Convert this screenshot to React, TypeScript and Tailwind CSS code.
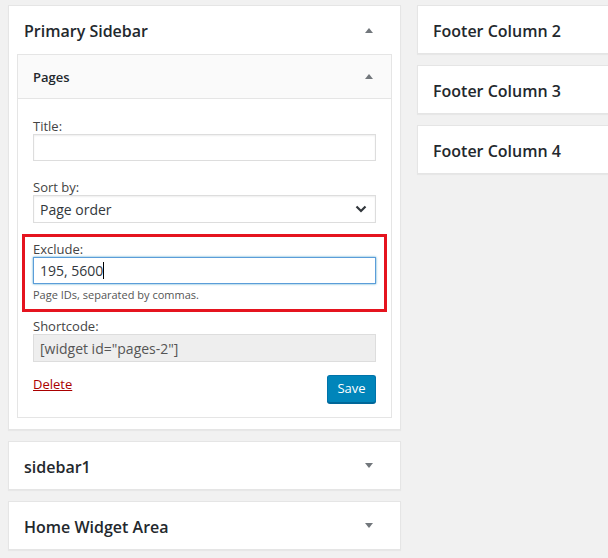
import React from "react";

const font = { fontFamily: '"Open Sans", "Noto Sans", sans-serif' };

const UpArrow = () => (
  <svg width="8" height="5" viewBox="0 0 8 5" className="fill-[#72777c]">
    <path d="M0 5 L4 0 L8 5 Z" />
  </svg>
);

const DownArrow = () => (
  <svg width="8" height="5" viewBox="0 0 8 5" className="fill-[#72777c]">
    <path d="M0 0 L8 0 L4 5 Z" />
  </svg>
);

const ClosedBox = ({ title, arrow }: { title: string; arrow?: boolean }) => (
  <div className="h-[49px] bg-white border border-[#e5e5e5] shadow-[0_1px_1px_rgba(0,0,0,0.04)] flex items-center justify-between pl-[15px] pr-[27px]">
    <h2 className="text-[16px] font-semibold text-[#23282d] mt-[2px]">{title}</h2>
    {arrow && <DownArrow />}
  </div>
);

export default function App() {
  return (
    <div
      className="w-[608px] h-[558px] overflow-hidden bg-[#f1f1f1] flex gap-[16px] pl-[8px] pt-[5px]"
      style={font}
    >
      <div className="w-[393px] shrink-0 flex flex-col gap-[11px]">
        <div className="bg-white border border-[#e5e5e5] shadow-[0_1px_1px_rgba(0,0,0,0.04)] pb-[11px]">
          <div className="h-[48px] flex items-center justify-between pl-[15px] pr-[27px]">
            <h2 className="text-[16px] font-semibold text-[#23282d] mt-[2px]">Primary Sidebar</h2>
            <UpArrow />
          </div>
          <div className="mx-[8px] border border-[#e5e5e5] bg-white">
            <div className="h-[44px] bg-[#fafafa] border-b border-[#e5e5e5] flex items-center justify-between pl-[15px] pr-[18px]">
              <h3 className="text-[13px] font-semibold text-[#23282d] mt-[2px]">Pages</h3>
              <UpArrow />
            </div>
            <div className="px-[15px] pt-[19px] pb-[14px] text-[13px] text-[#444]">
              <label className="block leading-[16px]">Title:</label>
              <input
                className="w-full h-[27px] border border-[#ddd] shadow-[inset_0_1px_2px_rgba(0,0,0,0.07)] px-[6px] text-[14px] outline-none"
                style={font}
              />
              <label className="block leading-[16px] mt-[18px]">Sort by:</label>
              <div className="w-full h-[28px] border border-[#ddd] shadow-[inset_0_1px_2px_rgba(0,0,0,0.07)] pl-[6px] pr-[8px] flex items-center justify-between text-[14px] text-[#32373c]">
                <span>Page order</span>
                <svg width="12" height="8" viewBox="0 0 12 8" fill="none" stroke="#32373c" strokeWidth="2.2">
                  <path d="M1.5 1.5 L6 6 L10.5 1.5" />
                </svg>
              </div>
              <div className="mt-[11px] -mx-[11px] border-[3px] border-[#e5141f] px-[8px] pt-[4px] pb-[7px]">
                <label className="block leading-[16px]">Exclude:</label>
                <div className="w-full h-[27px] border border-[#5b9dd9] shadow-[0_0_2px_rgba(30,140,190,0.8)] pl-[6px] flex items-center text-[14px] text-[#32373c]">
                  <span>195, 5600</span>
                  <span className="inline-block w-[1px] h-[17px] bg-black"></span>
                </div>
                <p className="mt-[4px] text-[11px] leading-[14px] text-[#555]">Page IDs, separated by commas.</p>
              </div>
              <label className="block leading-[16px] mt-[6px]">Shortcode:</label>
              <div className="w-full h-[28px] border border-[#ddd] bg-[#eee] pl-[6px] flex items-center text-[14px] text-[#555]">
                [widget id="pages-2"]
              </div>
              <div className="mt-[13px] flex justify-between items-start">
                <a className="text-[#a00] underline leading-[16px] mt-[1px]" href="#">
                  Delete
                </a>
                <button
                  className="w-[49px] h-[28px] bg-[#0085ba] border border-[#0073aa] border-b-[#006799] rounded-[3px] shadow-[0_1px_0_#006799] text-white text-[13px]"
                  style={font}
                >
                  Save
                </button>
              </div>
            </div>
          </div>
        </div>
        <ClosedBox title="sidebar1" arrow />
        <ClosedBox title="Home Widget Area" arrow />
      </div>
      <div className="w-[260px] shrink-0 flex flex-col gap-[11px]">
        <ClosedBox title="Footer Column 2" />
        <ClosedBox title="Footer Column 3" />
        <ClosedBox title="Footer Column 4" />
      </div>
    </div>
  );
}
